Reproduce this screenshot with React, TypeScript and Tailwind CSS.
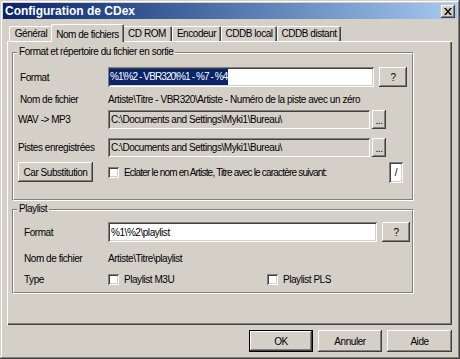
import React from "react";

const FONT = "font-['Liberation_Sans',Arial,sans-serif]";
const RAISED =
  "bg-[#d4d0c8] shadow-[inset_-1px_-1px_0_#404040,inset_1px_1px_0_#ffffff,inset_-2px_-2px_0_#808080,inset_2px_2px_0_#d4d0c8]";
const SUNKEN =
  "shadow-[inset_1px_1px_0_#808080,inset_-1px_-1px_0_#ffffff,inset_2px_2px_0_#404040,inset_-2px_-2px_0_#d4d0c8]";
const TAB =
  "flex h-[15px] items-center justify-center rounded-t-[2px] shadow-[inset_1px_1px_0_#ffffff,inset_-1px_0_0_#404040,inset_-2px_0_0_#808080]";

function Group({
  legend,
  className,
  children,
}: {
  legend: string;
  className: string;
  children: React.ReactNode;
}) {
  return (
    <div
      className={`relative border border-t-[#808080] border-l-[#808080] border-b-white border-r-white ${className}`}
    >
      <div className="flex h-full flex-col border border-t-white border-l-white border-b-[#808080] border-r-[#808080]">
        {children}
      </div>
      <span className="absolute left-[4px] top-[-8px] bg-[#d4d0c8] px-[2px] leading-[14px] text-black">
        {legend}
      </span>
    </div>
  );
}

function Btn({
  children,
  className,
}: {
  children: React.ReactNode;
  className: string;
}) {
  return (
    <div className={`flex shrink-0 items-center justify-center text-black ${RAISED} ${className}`}>
      {children}
    </div>
  );
}

function Check() {
  return <div className={`h-[11px] w-[11px] shrink-0 bg-white ${SUNKEN}`} />;
}

export default function App() {
  return (
    <div
      className={`${FONT} flex h-[359px] w-[460px] flex-col whitespace-nowrap bg-[#d4d0c8] p-[3px] text-[10px] tracking-[-0.45px] text-black shadow-[inset_-1px_-1px_0_#404040,inset_1px_1px_0_#d4d0c8,inset_-2px_-2px_0_#808080,inset_2px_2px_0_#ffffff]`}
    >
      {/* Title bar */}
      <div className="flex h-[16px] shrink-0 items-center justify-between bg-gradient-to-r from-[#0a246a] to-[#a6caf0] pl-[2px] pr-[2px]">
        <span className="text-[12px] font-bold leading-[16px] tracking-normal text-white">
          Configuration de CDex
        </span>
        <div className={`flex h-[13px] w-[14px] items-center justify-center ${RAISED}`}>
          <svg width="8" height="7" viewBox="0 0 8 7">
            <path d="M0 0h2l2 2.5L6 0h2L5 3.5 8 7H6L4 4.5 2 7H0l3-3.5z" fill="#000" />
          </svg>
        </div>
      </div>

      <div className="flex flex-col px-[4px]">
        {/* Tabs */}
        <div className="mt-[5px] flex h-[17px] items-end pl-[2px]">
          <div className={`${TAB} w-[44px]`}>Général</div>
          <div className="relative z-10 -mx-[2px] -mb-px flex h-[18px] w-[73px] items-start justify-center rounded-t-[2px] bg-[#d4d0c8] pt-[3px] shadow-[inset_1px_1px_0_#ffffff,inset_-1px_0_0_#404040,inset_-2px_0_0_#808080]">
            Nom de fichiers
          </div>
          <div className={`${TAB} w-[50px]`}>CD ROM</div>
          <div className={`${TAB} w-[49px]`}>Encodeur</div>
          <div className={`${TAB} w-[56px]`}>CDDB local</div>
          <div className={`${TAB} w-[64px]`}>CDDB distant</div>
        </div>

        {/* Panel */}
        <div className="flex h-[284px] w-[445px] flex-col bg-[#d4d0c8] pl-[5px] pt-[11px] shadow-[inset_1px_1px_0_#ffffff,inset_-1px_-1px_0_#404040,inset_-2px_-2px_0_#808080]">
          <Group legend="Format et répertoire du fichier en sortie" className="h-[149px] w-[402px]">
            {/* Format */}
            <div className="mt-[13px] flex h-[20px] items-center">
              <span className="w-[94px] shrink-0 pl-[6px]">Format</span>
              <div className={`flex h-[20px] w-[266px] items-center bg-white pl-[1px] ${SUNKEN}`}>
                <span className="inline-block h-[16px] bg-[#0a246a] px-[1px] leading-[16px] tracking-[-0.9px] text-white">
                  %1\%2 - VBR320\%1 - %7 - %4
                </span>
              </div>
              <Btn className="ml-[5px] h-[20px] w-[28px]">?</Btn>
            </div>
            {/* Nom de fichier */}
            <div className="mt-[3px] flex h-[18px] items-center">
              <span className="w-[94px] shrink-0 pl-[6px]">Nom de fichier</span>
              <span>Artiste\Titre - VBR320\Artiste - Numéro de la piste avec un zéro</span>
            </div>
            {/* WAV -> MP3 */}
            <div className="mt-[2px] flex h-[19px] items-center">
              <span className="w-[94px] shrink-0 pl-[4px]">WAV -&gt; MP3</span>
              <div className={`flex h-[19px] w-[262px] items-center bg-[#d4d0c8] pl-[3px] ${SUNKEN}`}>
                C:\Documents and Settings\Myki1\Bureau\
              </div>
              <Btn className="ml-[2px] h-[19px] w-[14px] items-end pb-[4px] leading-[8px]">...</Btn>
            </div>
            {/* Pistes */}
            <div className="mt-[9px] flex h-[19px] items-center">
              <span className="w-[94px] shrink-0 pl-[4px]">Pistes enregistrées</span>
              <div className={`flex h-[19px] w-[262px] items-center bg-[#d4d0c8] pl-[3px] ${SUNKEN}`}>
                C:\Documents and Settings\Myki1\Bureau\
              </div>
              <Btn className="ml-[2px] h-[19px] w-[14px] items-end pb-[4px] leading-[8px]">...</Btn>
            </div>
            {/* Car substitution */}
            <div className="mt-[5px] flex h-[20px] items-center">
              <Btn className="ml-[4px] h-[20px] w-[75px]">Car Substitution</Btn>
              <div className="ml-[15px]">
                <Check />
              </div>
              <span className="ml-[5px] tracking-[-0.8px]">
                Eclater le nom en Artiste, Titre avec le caractère suivant:
              </span>
              <div
                className={`ml-auto mr-[9px] flex h-[21px] w-[14px] items-start justify-center bg-white pt-[3px] ${SUNKEN}`}
              >
                /
              </div>
            </div>
          </Group>

          <Group legend="Playlist" className="mt-[8px] h-[85px] w-[402px]">
            <div className="mt-[11px] flex h-[20px] items-center">
              <span className="w-[94px] shrink-0 pl-[10px]">Format</span>
              <div className={`flex h-[20px] w-[269px] items-center bg-white pl-[3px] ${SUNKEN}`}>
                %1\%2\playlist
              </div>
              <Btn className="ml-[5px] h-[20px] w-[28px]">?</Btn>
            </div>
            <div className="mt-[7px] flex h-[18px] items-center">
              <span className="w-[94px] shrink-0 pl-[10px]">Nom de fichier</span>
              <span>Artiste\Titre\playlist</span>
            </div>
            <div className="mt-[3px] flex h-[18px] items-center">
              <span className="w-[94px] shrink-0 pl-[10px]">Type</span>
              <div className="flex w-[159px] items-center">
                <Check />
                <span className="ml-[5px]">Playlist M3U</span>
              </div>
              <div className="flex items-center">
                <Check />
                <span className="ml-[5px]">Playlist PLS</span>
              </div>
            </div>
          </Group>
        </div>

        {/* Bottom buttons */}
        <div className="mt-[5px] flex justify-end gap-[5px] pr-[1px]">
          <div className="flex h-[22px] w-[64px] items-center justify-center border border-black bg-[#d4d0c8] shadow-[inset_-1px_-1px_0_#404040,inset_1px_1px_0_#ffffff,inset_-2px_-2px_0_#808080]">
            OK
          </div>
          <Btn className="h-[22px] w-[64px]">Annuler</Btn>
          <Btn className="h-[22px] w-[65px]">Aide</Btn>
        </div>
      </div>
    </div>
  );
}
